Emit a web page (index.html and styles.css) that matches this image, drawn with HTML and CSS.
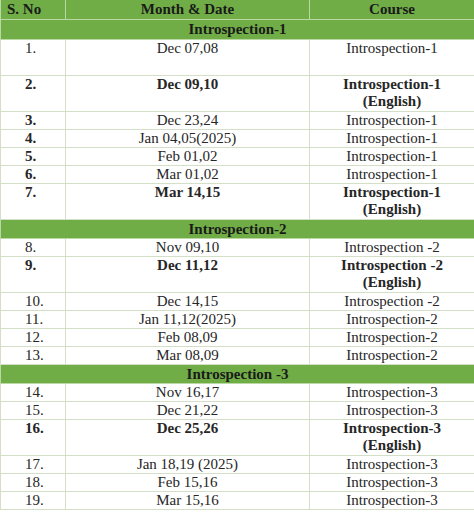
FILE: index.html
```html
<!DOCTYPE html>
<html>
<head>
<meta charset="utf-8">
<link rel="stylesheet" href="styles.css">
</head>
<body>
<table class="schedule">
  <colgroup>
    <col class="c-no">
    <col class="c-date">
    <col class="c-course">
  </colgroup>
  <thead>
    <tr class="head">
      <th class="h-no">S. No</th>
      <th>Month &amp; Date</th>
      <th>Course</th>
    </tr>
  </thead>
  <tbody>
    <tr class="section first"><td colspan="3">Introspection-1</td></tr>
    <tr class="double"><td class="no">1.</td><td>Dec 07,08</td><td>Introspection-1</td></tr>
    <tr class="double bold"><td class="no">2.</td><td>Dec 09,10</td><td>Introspection-1<br>(English)</td></tr>
    <tr><td class="no b">3.</td><td>Dec 23,24</td><td>Introspection-1</td></tr>
    <tr><td class="no b">4.</td><td>Jan 04,05(2025)</td><td>Introspection-1</td></tr>
    <tr><td class="no b">5.</td><td>Feb 01,02</td><td>Introspection-1</td></tr>
    <tr><td class="no b">6.</td><td>Mar 01,02</td><td>Introspection-1</td></tr>
    <tr class="double bold"><td class="no">7.</td><td>Mar 14,15</td><td>Introspection-1<br>(English)</td></tr>
    <tr class="section"><td colspan="3">Introspection-2</td></tr>
    <tr><td class="no">8.</td><td>Nov 09,10</td><td>Introspection -2</td></tr>
    <tr class="double bold"><td class="no">9.</td><td>Dec 11,12</td><td>Introspection -2<br>(English)</td></tr>
    <tr><td class="no">10.</td><td>Dec 14,15</td><td>Introspection -2</td></tr>
    <tr><td class="no">11.</td><td>Jan 11,12(2025)</td><td>Introspection-2</td></tr>
    <tr><td class="no">12.</td><td>Feb 08,09</td><td>Introspection-2</td></tr>
    <tr><td class="no">13.</td><td>Mar 08,09</td><td>Introspection-2</td></tr>
    <tr class="section"><td colspan="3">Introspection -3</td></tr>
    <tr><td class="no">14.</td><td>Nov 16,17</td><td>Introspection-3</td></tr>
    <tr><td class="no">15.</td><td>Dec 21,22</td><td>Introspection-3</td></tr>
    <tr class="double bold"><td class="no">16.</td><td>Dec 25,26</td><td>Introspection-3<br>(English)</td></tr>
    <tr><td class="no">17.</td><td>Jan 18,19 (2025)</td><td>Introspection-3</td></tr>
    <tr><td class="no">18.</td><td>Feb 15,16</td><td>Introspection-3</td></tr>
    <tr><td class="no">19.</td><td>Mar 15,16</td><td>Introspection-3</td></tr>
  </tbody>
</table>
</body>
</html>
```
FILE: styles.css
```css
html, body {
  margin: 0;
  padding: 0;
  background: #ffffff;
}

.schedule {
  width: 474px;
  table-layout: fixed;
  border-collapse: collapse;
  font-family: "Liberation Serif", "Times New Roman", serif;
  font-size: 15px;
  color: #262626;
}

.c-no { width: 65px; }
.c-date { width: 244px; }
.c-course { width: 165px; }

.schedule th,
.schedule td {
  border: 1px solid #d3dfc7;
  padding: 0;
  text-align: center;
  vertical-align: top;
  line-height: 17px;
  white-space: nowrap;
}

.head th {
  background: #70ad47;
  color: #1a1a1a;
  font-weight: bold;
  line-height: 19px;
  border-color: #b9d8a3;
  border-top: none;
}

.head th.h-no {
  text-align: left;
  padding-left: 6px;
}

.section td {
  background: #70ad47;
  color: #1a1a1a;
  font-weight: bold;
  line-height: 18px;
  border-color: #b9d8a3;
}

.section.first td {
  line-height: 19px;
}

.schedule td.no {
  text-align: left;
  padding-left: 24px;
}

.double td {
  height: 35px;
}

.bold td,
.schedule td.b {
  font-weight: bold;
}
```
